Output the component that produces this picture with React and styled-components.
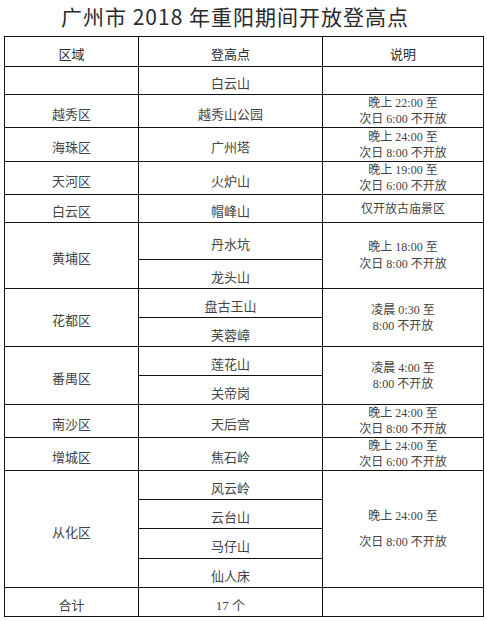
import React from 'react';
import styled, { createGlobalStyle } from 'styled-components';

const GlobalStyle = createGlobalStyle`
  html, body {
    margin: 0;
    padding: 0;
    background: #fff;
  }
`;

const groups = [
  { region: '', spots: [{ name: '白云山', h: 28 }], note: [] },
  { region: '越秀区', spots: [{ name: '越秀山公园', h: 33 }], note: ['晚上 22:00 至', '次日 6:00 不开放'] },
  { region: '海珠区', spots: [{ name: '广州塔', h: 34 }], note: ['晚上 24:00 至', '次日 8:00 不开放'] },
  { region: '天河区', spots: [{ name: '火炉山', h: 33 }], note: ['晚上 19:00 至', '次日 6:00 不开放'] },
  { region: '白云区', spots: [{ name: '帽峰山', h: 28 }], note: ['仅开放古庙景区'] },
  {
    region: '黄埔区',
    spots: [{ name: '丹水坑', h: 37 }, { name: '龙头山', h: 29 }],
    note: ['晚上 18:00 至', '次日 8:00 不开放'],
    lh: 17,
  },
  {
    region: '花都区',
    spots: [{ name: '盘古王山', h: 29 }, { name: '芙蓉嶂', h: 29 }],
    note: ['凌晨 0:30 至', '8:00 不开放'],
  },
  {
    region: '番禺区',
    spots: [{ name: '莲花山', h: 29 }, { name: '关帝岗', h: 29 }],
    note: ['凌晨 4:00 至', '8:00 不开放'],
  },
  { region: '南沙区', spots: [{ name: '天后宫', h: 33 }], note: ['晚上 24:00 至', '次日 8:00 不开放'] },
  { region: '增城区', spots: [{ name: '焦石岭', h: 33 }], note: ['晚上 24:00 至', '次日 6:00 不开放'] },
  {
    region: '从化区',
    spots: [
      { name: '风云岭', h: 29 },
      { name: '云台山', h: 29 },
      { name: '马仔山', h: 30 },
      { name: '仙人床', h: 29 },
    ],
    note: ['晚上 24:00 至', '次日 8:00 不开放'],
    lh: 26,
  },
  { region: '合计', spots: [{ name: '17 个', h: 29 }], note: [] },
];

function App() {
  return (
    <Page>
      <GlobalStyle />
      <Title>广州市 2018 年重阳期间开放登高点</Title>
      <Table>
        <colgroup>
          <col style={{ width: 134 }} />
          <col style={{ width: 184 }} />
          <col />
        </colgroup>
        <tbody>
          <Row $h={30}>
            <Head>区域</Head>
            <Head>登高点</Head>
            <Head>说明</Head>
          </Row>
          {groups.map((g, gi) =>
            g.spots.map((s, si) => (
              <Row key={gi + '-' + si} $h={s.h}>
                {si === 0 && <Cell rowSpan={g.spots.length}>{g.region}</Cell>}
                <Cell>{s.name}</Cell>
                {si === 0 && (
                  <Note rowSpan={g.spots.length} $lh={g.lh || 16}>
                    {g.note.map((line, li) => (
                      <div key={li}>{line}</div>
                    ))}
                  </Note>
                )}
              </Row>
            ))
          )}
        </tbody>
      </Table>
    </Page>
  );
}

const Page = styled.div`
  width: 487px;
  height: 621px;
  padding: 0 3px 0 4px;
  box-sizing: border-box;
  background: #fff;
`;

const Title = styled.h1`
  margin: 0;
  height: 36px;
  padding: 4px 18px 0 0;
  box-sizing: border-box;
  text-align: center;
  font-family: "Noto Sans CJK SC", "Noto Sans", sans-serif;
  font-size: 21px;
  font-weight: 400;
  line-height: 24px;
  letter-spacing: 1px;
  color: #2a2a2a;
`;

const Table = styled.table`
  width: 480px;
  border-collapse: collapse;
  table-layout: fixed;
  border: 1px solid #111;
  font-family: "Liberation Serif", "Noto Sans CJK SC", serif;
  color: #444;
`;

const Row = styled.tr`
  height: ${({ $h }) => $h}px;
`;

const Cell = styled.td`
  border: 1px solid #111;
  padding: 7px 0 0;
  text-align: center;
  vertical-align: middle;
  font-size: 13px;
  line-height: 16px;
`;

const Head = styled(Cell)`
  font-weight: normal;
  color: #2a2a2a;
`;

const Note = styled.td`
  border: 1px solid #111;
  padding: 0;
  text-align: center;
  vertical-align: middle;
  font-size: 12px;
  line-height: ${({ $lh }) => $lh}px;
`;

export default App;
